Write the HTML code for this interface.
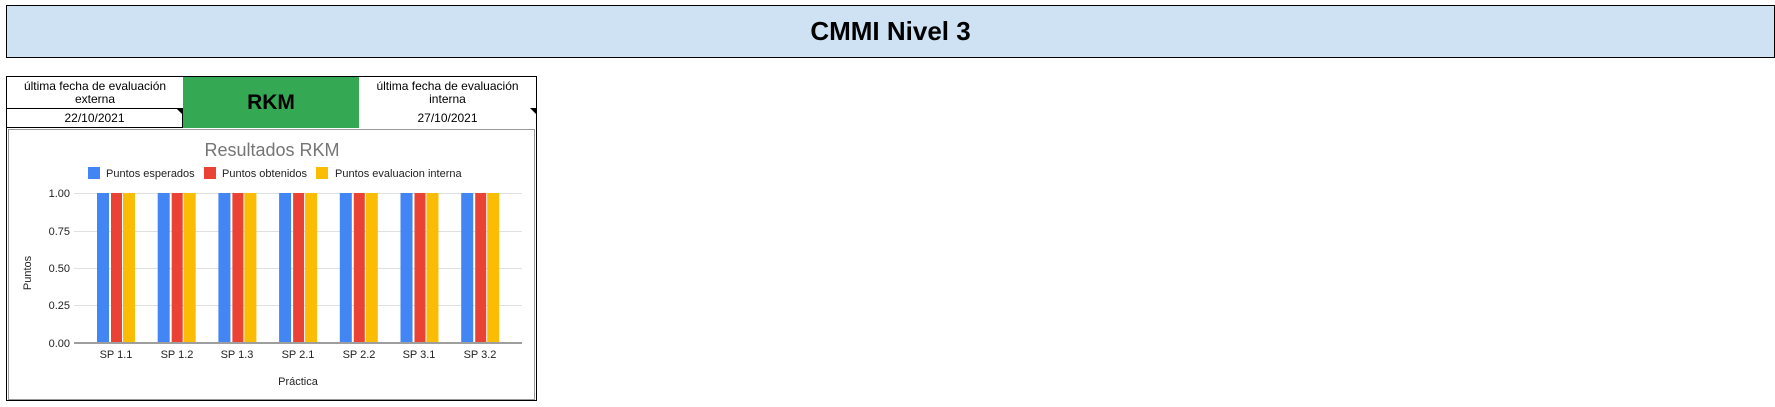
<!DOCTYPE html>
<html><head><meta charset="utf-8"><style>
body{margin:0;width:1775px;height:407px;background:#fff;font-family:"Liberation Sans",Arial,sans-serif;position:relative;overflow:hidden}
.a{position:absolute;box-sizing:border-box}
.t{text-align:center;font-size:12px;color:#000;line-height:13px}
</style></head><body>
<div class="a" style="left:6px;top:5px;width:1769px;height:53px;background:#cfe2f3;border:1px solid #000;font-weight:bold;font-size:26px;text-align:center;line-height:51px">CMMI Nivel 3</div>

<div class="a" style="left:6px;top:76px;width:531px;height:325px;border:1px solid #000"></div>
<div class="a t" style="left:7px;top:80px;width:176px">última fecha de evaluación<br>externa</div>
<div class="a t" style="left:6px;top:108px;width:177px;height:20px;border:1px solid #000;line-height:18px">22/10/2021</div>
<div class="a" style="left:176px;top:108px;width:0;height:0;border-left:6px solid transparent;border-top:6px solid #000"></div>
<div class="a" style="left:183px;top:77px;width:176px;height:51px;background:#34a853;font-weight:bold;font-size:21px;text-align:center;line-height:51px">RKM</div>
<div class="a t" style="left:359px;top:80px;width:177px">última fecha de evaluación<br>interna</div>
<div class="a t" style="left:359px;top:110px;width:177px;line-height:16px">27/10/2021</div>
<div class="a" style="left:530px;top:108px;width:0;height:0;border-left:6px solid transparent;border-top:6px solid #000"></div>

<div class="a" style="left:8px;top:129px;width:527px;height:271px;border:1px solid #999"></div>
<svg class="a" style="left:0;top:0" width="560" height="407" font-family="Liberation Sans, Arial, sans-serif">
<text x="272" y="156" font-size="18" fill="#757575" text-anchor="middle">Resultados RKM</text>
<rect x="88" y="167" width="12" height="12" fill="#4285f4"/><text x="106" y="177" font-size="11" fill="#222">Puntos esperados</text>
<rect x="204" y="167" width="12" height="12" fill="#ea4335"/><text x="222" y="177" font-size="11" fill="#222">Puntos obtenidos</text>
<rect x="316" y="167" width="12" height="12" fill="#fbbc04"/><text x="335" y="177" font-size="11" fill="#222">Puntos evaluacion interna</text>
<g stroke="#e0e0e0" stroke-width="1">
<line x1="74" y1="193.5" x2="522" y2="193.5"/><line x1="74" y1="231.5" x2="522" y2="231.5"/><line x1="74" y1="268.5" x2="522" y2="268.5"/><line x1="74" y1="305.5" x2="522" y2="305.5"/></g>
<g font-size="11" fill="#222" text-anchor="end">
<text x="70" y="197">1.00</text><text x="70" y="235">0.75</text><text x="70" y="272">0.50</text><text x="70" y="309">0.25</text><text x="70" y="347">0.00</text></g>
<g id="b">
<rect x="97" y="193" width="12" height="150" fill="#4285f4"/><rect x="111" y="193" width="11" height="150" fill="#ea4335"/><rect x="123" y="193" width="12" height="150" fill="#fbbc04"/></g>
<use href="#b" x="60.7"/><use href="#b" x="121.4"/><use href="#b" x="182.1"/><use href="#b" x="242.8"/><use href="#b" x="303.5"/><use href="#b" x="364.2"/>
<line x1="74" y1="343" x2="522" y2="343" stroke="#9e9e9e" stroke-width="2"/>
<g font-size="11" fill="#222" text-anchor="middle">
<text x="116" y="358">SP 1.1</text><text x="177" y="358">SP 1.2</text><text x="237" y="358">SP 1.3</text><text x="298" y="358">SP 2.1</text><text x="359" y="358">SP 2.2</text><text x="419" y="358">SP 3.1</text><text x="480" y="358">SP 3.2</text>
<text x="298" y="385">Práctica</text>
<text transform="translate(31,273) rotate(-90)">Puntos</text></g>
</svg>
</body></html>
